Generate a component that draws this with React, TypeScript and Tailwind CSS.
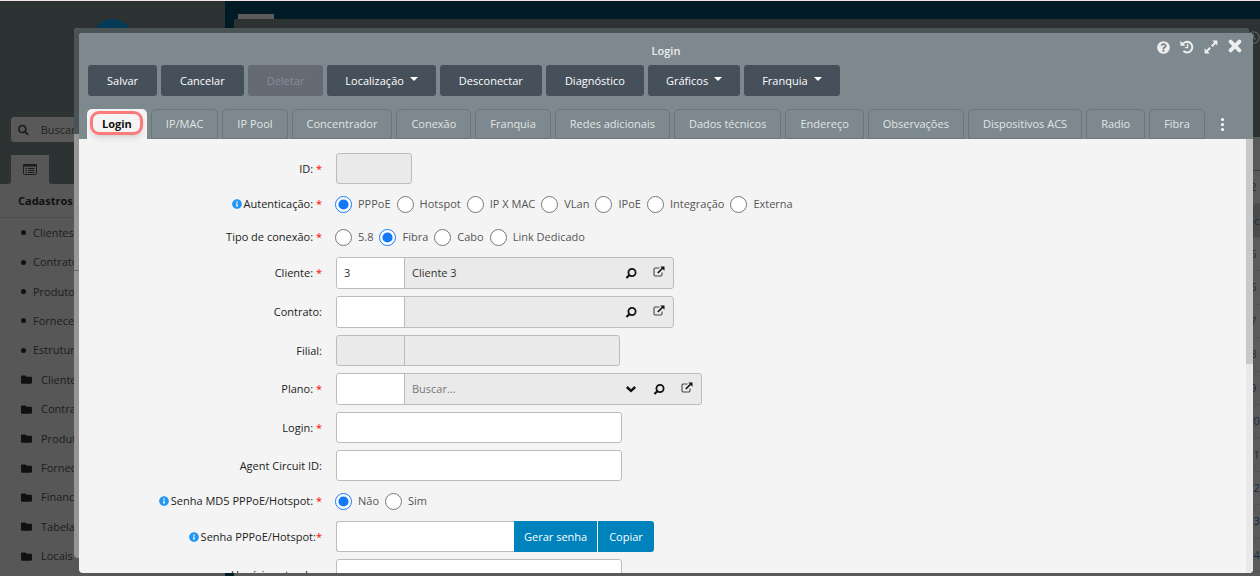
import { FaFolder, FaInfoCircle, FaQuestionCircle, FaRegClock, FaSearch } from "react-icons/fa";

const toolbar = [
  { label: "Salvar" },
  { label: "Cancelar" },
  { label: "Deletar", disabled: true },
  { label: "Localização", menu: true },
  { label: "Desconectar" },
  { label: "Diagnóstico" },
  { label: "Gráficos", menu: true },
  { label: "Franquia", menu: true },
];

const tabs = [
  "IP/MAC",
  "IP Pool",
  "Concentrador",
  "Conexão",
  "Franquia",
  "Redes adicionais",
  "Dados técnicos",
  "Endereço",
  "Observações",
  "Dispositivos ACS",
  "Radio",
  "Fibra",
];

const shortcuts = ["Clientes", "Contratos", "Produtos", "Fornecedores", "Estrutura"];
const folders = ["Clientes", "Contratos", "Produtos", "Fornecedores", "Financeiro", "Tabelas", "Locais"];
const tableRows = ["2", "nc", "5", "6", "7", "8", "9", "10", "11", "12", "13", "14"];

function Magnifier() {
  return (
    <svg viewBox="0 0 12 12" className="size-3" fill="none" stroke="#111" aria-hidden="true">
      <circle cx="7" cy="5.5" r="3.6" strokeWidth="1.8" />
      <path d="M4.3 8.2 1.4 11" strokeWidth="2.2" />
    </svg>
  );
}

function ExternalLink() {
  return (
    <svg viewBox="0 0 12 12" className="size-3 mb-[2px]" fill="none" aria-hidden="true">
      <path d="M6.5 2H2.2C1.4 2 1 2.4 1 3.2v5.6C1 9.6 1.4 10 2.2 10h5.6c.8 0 1.2-.4 1.2-1.2V6.5" stroke="#444" strokeWidth="1.1" />
      <path d="M4.8 7 9.8 2" stroke="#111" strokeWidth="1.7" />
      <path d="M7.3.5h4.2v4.2z" fill="#111" />
    </svg>
  );
}

function Chevron() {
  return (
    <svg viewBox="0 0 12 12" className="size-3" fill="none" stroke="#111" aria-hidden="true">
      <path d="M1.8 4 6 7.8 10.2 4" strokeWidth="2.4" />
    </svg>
  );
}

function ExpandIcon() {
  return (
    <svg viewBox="0 0 14 14" className="size-[14px]" aria-hidden="true">
      <path d="M8.3.6h5.1v5.1zM.6 8.3v5.1h5.1z" fill="#eee" />
      <path d="M7.8 6.2 11.5 2.5M6.2 7.8 2.5 11.5" stroke="#eee" strokeWidth="2" />
    </svg>
  );
}

function HistoryIcon() {
  return (
    <svg viewBox="0 0 14 14" className="size-[14px]" fill="none" stroke="#eee" aria-hidden="true">
      <path d="M2.6 4.2A5.3 5.3 0 1 1 3.4 11" strokeWidth="2" />
      <path d="M.4.8v5h5z" fill="#eee" stroke="none" />
      <path d="M7.6 4v3.6H5" strokeWidth="1.4" />
    </svg>
  );
}

function CloseIcon() {
  return (
    <svg viewBox="0 0 14 14" className="size-[14px]" fill="none" stroke="#eee" aria-hidden="true">
      <path d="M2.6 2.6l8.8 8.8M11.4 2.6l-8.8 8.8" strokeWidth="3.8" strokeLinecap="round" />
    </svg>
  );
}

type FieldProps = {
  label: string;
  id?: string;
  required?: boolean;
  tight?: boolean;
  info?: boolean;
  children: React.ReactNode;
};

function Field({ label, id, required, tight, info, children }: FieldProps) {
  return (
    <div className="flex items-center gap-[14px]">
      <label htmlFor={id} className="w-[243px] shrink-0 flex justify-end items-center text-[#222] whitespace-pre">
        {info && <FaInfoCircle className="size-[10px] mr-[2px] text-[#2196f3]" />}
        {label}
        {required && <span className="text-[#f00]">{tight ? "*" : " *"}</span>}
      </label>
      {children}
    </div>
  );
}

function RadioGroup({ name, options, selected }: { name: string; options: string[]; selected: string }) {
  return (
    <div role="radiogroup" aria-label={name} className="-ml-px flex items-center gap-[6px] h-[26px]">
      {options.map((option) => (
        <label key={option} className="flex items-center gap-[6px] text-[#555]">
          <input type="radio" name={name} defaultChecked={option === selected} className="size-[17px] accent-[#1479f5]" />
          {option}
        </label>
      ))}
    </div>
  );
}

type LookupProps = {
  id: string;
  code?: string;
  text?: string;
  placeholder?: string;
  dropdown?: boolean;
};

function Lookup({ id, code, text, placeholder, dropdown }: LookupProps) {
  return (
    <div className="flex h-8 border border-[#b9bdc2] rounded-[3px] bg-[#eaeaea] overflow-hidden">
      <input id={id} defaultValue={code} className="w-[68px] bg-white border-r border-[#b9bdc2] px-[7px] text-[#333]" />
      <input
        aria-label={`${id} descrição`}
        defaultValue={text}
        placeholder={placeholder}
        className="w-[212px] px-[7px] text-[#333] placeholder:text-[#777]"
      />
      {dropdown && (
        <button aria-label="Abrir lista" className="w-7 flex items-center justify-center">
          <Chevron />
        </button>
      )}
      <button aria-label="Pesquisar" className="w-7 flex items-center justify-center">
        <Magnifier />
      </button>
      <button aria-label="Abrir cadastro" className="w-7 flex items-center justify-center">
        <ExternalLink />
      </button>
    </div>
  );
}

function Sidebar() {
  return (
    <aside className="w-[225px] shrink-0 bg-[#2d3233] text-[#1c1c1c]">
      <div className="h-[116px] pt-[18px]">
        <div className="size-[41px] mx-auto rounded-full bg-[#033b58]" />
      </div>
      <div className="ml-[11px] h-[25px] rounded-[3px] bg-[#595959] flex items-center gap-3 pl-[7px]">
        <FaSearch className="size-3 text-[#1c1c1c]" />
        <input aria-label="Buscar" placeholder="Buscar" className="placeholder:text-[#222] w-full" />
      </div>
      <div className="flex mt-[13px] h-[29px] bg-[#575757]">
        <div className="w-[11px] bg-[#2d3233] rounded-br-[3px]" />
        <button aria-label="Cadastros" className="w-[38px] rounded-t-[3px] bg-[#575757] flex items-center justify-center">
          <svg viewBox="0 0 14 11" className="w-[14px] h-[11px]" aria-hidden="true">
            <rect x=".5" y=".5" width="13" height="10" rx="1" fill="none" stroke="#1c1c1c" />
            <path d="M0 1.5h14" stroke="#1c1c1c" strokeWidth="2" />
            <path d="M2.5 4.5h1.5M5 4.5h6.5M2.5 6.5h1.5M5 6.5h6.5M2.5 8.5h1.5M5 8.5h6.5" stroke="#1c1c1c" />
          </svg>
        </button>
        <div className="flex-1 bg-[#2d3233] rounded-bl-[3px]" />
      </div>
      <div className="bg-[#575757] h-full">
        <h2 className="h-[34px] pl-[18px] flex items-center font-bold text-[#111] border-b border-[#4b4b4b]">Cadastros</h2>
        <ul className="grid grid-rows-12 h-[353px]">
          {shortcuts.map((item) => (
            <li key={item} className="flex items-center gap-[7px] pl-[21px]">
              <span className="size-[5px] rounded-full bg-[#111]" />
              {item}
            </li>
          ))}
          {folders.map((item) => (
            <li key={item} className="flex items-center gap-[9px] pl-[21px]">
              <FaFolder className="size-[11px] text-[#111]" />
              {item}
            </li>
          ))}
        </ul>
      </div>
    </aside>
  );
}

function Workspace() {
  return (
    <div className="flex-1 flex flex-col bg-[#001b26] pl-[9px] pt-[13px]">
      <div className="w-[36px] h-[5px] ml-1 bg-[#5c5c5c]" />
      <div className="flex-1 flex flex-col items-end bg-[#5a5a5a] rounded-tl-[3px] overflow-hidden">
        <div className="w-full h-[118px] shrink-0 bg-[#2d3233] flex justify-end pt-3">
          <FaRegClock className="size-[13px] text-[#5c5c5c]" />
        </div>
        <div className="w-full h-[34px] shrink-0 border-b border-[#3c3c3c]" />
        <div className="w-[13px] h-[401px] shrink-0 grid grid-rows-12 text-[#1c2a3c]">
          {tableRows.map((row) => (
            <div key={row} className="flex items-center justify-center border-b border-[#525252] nth-2:bg-[#4b4b4b]">
              {row}
            </div>
          ))}
        </div>
      </div>
    </div>
  );
}

function LoginWindow() {
  return (
    <section
      role="dialog"
      aria-label="Login"
      className="absolute left-[79px] right-[7px] top-8 bottom-[3px] rounded-[4px] overflow-hidden flex flex-col bg-[#f4f4f4]"
    >
      <header className="shrink-0 bg-[#7d898e]">
        <div className="grid grid-cols-[1fr_auto_1fr] h-8">
          <h1 className="col-start-2 pt-[10px] font-semibold text-[#eee]">Login</h1>
          <div className="flex justify-end gap-[10px] pt-[6px] pr-[11px] items-start text-[#eee]">
            <button aria-label="Ajuda" className="pt-[2px]">
              <FaQuestionCircle className="size-[13px]" />
            </button>
            <button aria-label="Histórico" className="pt-px">
              <HistoryIcon />
            </button>
            <button aria-label="Expandir" className="pt-px">
              <ExpandIcon />
            </button>
            <button aria-label="Fechar">
              <CloseIcon />
            </button>
          </div>
        </div>
        <div className="flex gap-1 pl-[9px]">
          {toolbar.map(({ label, disabled, menu }) =>
            menu ? (
              <button
                key={label}
                aria-haspopup="menu"
                className="h-[31px] px-[18px] rounded-[3px] bg-[#46505a] text-white font-medium flex items-center gap-[6px]"
              >
                {label}
                <span className="border-x-4 border-x-transparent border-t-4 border-t-white mb-1" />
              </button>
            ) : (
              <button
                key={label}
                disabled={disabled}
                className="h-[31px] px-[19px] rounded-[3px] bg-[#46505a] text-white font-medium disabled:bg-[#646b75] disabled:text-[#858c96]"
              >
                {label}
              </button>
            ),
          )}
        </div>
        <nav className="flex items-end gap-1 pl-2 mt-[13px]" role="tablist">
          <button role="tab" aria-selected="true" className="relative h-[30px] px-[15px] rounded-t-[5px] bg-[#f4f4f4] text-[#111] font-bold">
            Login
            <span className="absolute left-[3px] right-[4px] top-[2px] h-6 border-3 border-[#fb7b7b] rounded-[9px] shadow-md" />
          </button>
          {tabs.map((tab) => (
            <button key={tab} role="tab" className="h-[30px] px-[14px] rounded-t-[5px] border border-[#6a767c] text-[#e2e5e6]">
              {tab}
            </button>
          ))}
          <button aria-label="Mais abas" className="h-[30px] px-3 flex flex-col items-center justify-center gap-[2px]">
            <span className="size-[3px] rounded-full bg-white" />
            <span className="size-[3px] rounded-full bg-white" />
            <span className="size-[3px] rounded-full bg-white" />
          </button>
        </nav>
      </header>

      <div className="flex-1 min-h-0 flex">
        <form className="flex-1 overflow-hidden pt-[14px] flex flex-col gap-[7px]">
          <Field label="ID:" id="id" required>
            <input id="id" disabled className="w-[76px] h-[31px] bg-[#eaeaea] border border-[#b9bdc2] rounded-[3px]" />
          </Field>
          <Field label="Autenticação:" required info>
            <RadioGroup
              name="Autenticação"
              options={["PPPoE", "Hotspot", "IP X MAC", "VLan", "IPoE", "Integração", "Externa"]}
              selected="PPPoE"
            />
          </Field>
          <Field label="Tipo de conexão:" required>
            <RadioGroup name="Tipo de conexão" options={["5.8", "Fibra", "Cabo", "Link Dedicado"]} selected="Fibra" />
          </Field>
          <Field label="Cliente:" id="cliente" required>
            <Lookup id="cliente" code="3" text="Cliente 3" />
          </Field>
          <Field label="Contrato:" id="contrato">
            <Lookup id="contrato" />
          </Field>
          <Field label="Filial:" id="filial">
            <div className="flex w-[284px] h-[31px] bg-[#eaeaea] border border-[#b9bdc2] rounded-[3px]">
              <input id="filial" disabled className="w-[68px] border-r border-[#b9bdc2]" />
              <input aria-label="filial descrição" disabled className="flex-1 min-w-0" />
            </div>
          </Field>
          <Field label="Plano:" id="plano" required>
            <Lookup id="plano" placeholder="Buscar..." dropdown />
          </Field>
          <Field label="Login:" id="login" required>
            <input id="login" className="w-[286px] h-[31px] bg-white border border-[#b9bdc2] rounded-[3px] px-[7px]" />
          </Field>
          <Field label="Agent Circuit ID:" id="circuit">
            <input id="circuit" className="w-[286px] h-[31px] bg-white border border-[#b9bdc2] rounded-[3px] px-[7px]" />
          </Field>
          <Field label="Senha MD5 PPPoE/Hotspot:" required info>
            <RadioGroup name="Senha MD5" options={["Não", "Sim"]} selected="Não" />
          </Field>
          <Field label="Senha PPPoE/Hotspot:" id="senha" required tight info>
            <div className="flex h-[31px]">
              <input id="senha" className="w-[178px] bg-white border border-r-0 border-[#b9bdc2] rounded-l-[3px] px-[7px]" />
              <button type="button" className="px-[10px] bg-[#0082bd] text-white">Gerar senha</button>
              <button type="button" className="px-[11px] ml-px bg-[#0082bd] text-white rounded-r-[3px]">Copiar</button>
            </div>
          </Field>
          <Field label="Usuário roteador:" id="usuario">
            <input id="usuario" className="w-[286px] h-[31px] bg-white border border-[#b9bdc2] rounded-[3px] px-[7px]" />
          </Field>
        </form>
        <div className="w-[7px] bg-[#e9e9e9]">
          <div className="h-[225px] bg-[#c8c8c8]" />
        </div>
      </div>
    </section>
  );
}

export default function App() {
  return (
    <main className="relative h-screen overflow-hidden flex border-t border-[#f3e4e2] font-['Open_Sans','Noto_Sans',sans-serif] text-[11px] leading-4">
      <Sidebar />
      <Workspace />
      {/* window stacked behind the active one */}
      <div className="absolute left-[74px] right-[11px] top-[27px] bottom-[18px] rounded-[4px] overflow-hidden bg-[#979695]">
        <div className="h-[106px] bg-[#4a5455]" />
        <div className="h-[137px] border-b border-[#6b6b6b]" />
      </div>
      <LoginWindow />
    </main>
  );
}
